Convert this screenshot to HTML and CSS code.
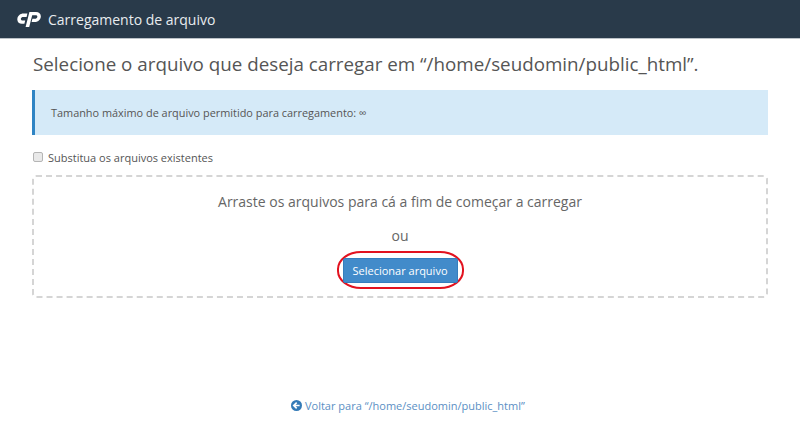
FILE: index.html
```html
<!DOCTYPE html>
<html lang="pt">
<head>
    <meta charset="UTF-8">
    <title>Carregamento de arquivo</title>
    <link rel="stylesheet" href="styles.css">
</head>
<body>
    <header class="topbar">
        <svg class="logo" width="24" height="16" viewBox="0 0 24 16">
            <path d="M10.4 2.6H6.4C3.2 2.6.9 4.8.4 7.4-.2 10.6 2 12.8 4.8 12.8H7.4L8.2 9.4H5.6C4.3 9.4 3.7 8.6 3.9 7.5 4.1 6.6 5 5.9 6.2 5.9H9.6Z" fill="#fff"/>
            <path d="M8.6 16 12.4 1H19C22.2 1 24.2 3.2 23.8 6 23.4 8.8 21 11 18 11H14.6L15.4 7.7H17.8C19.1 7.7 20.1 7 20.3 5.9 20.5 4.9 19.7 4.3 18.6 4.3H15.2L12.2 16Z" fill="#fff"/>
        </svg>
        <span class="topbar-title">Carregamento de arquivo</span>
    </header>

    <main class="content">
        <h1>Selecione o arquivo que deseja carregar em “/home/seudomin/public_html”.</h1>

        <div class="info-box">Tamanho máximo de arquivo permitido para carregamento: ∞</div>

        <label class="overwrite">
            <input type="checkbox">
            <span>Substitua os arquivos existentes</span>
        </label>

        <div class="dropzone">
            <p class="drop-text">Arraste os arquivos para cá a fim de começar a carregar</p>
            <p class="drop-or">ou</p>
            <div class="btn-ring">
                <button class="select-btn">Selecionar arquivo</button>
            </div>
        </div>

        <footer class="back">
            <a href="#">
                <svg width="11" height="11" viewBox="0 0 12 12">
                    <circle cx="6" cy="6" r="6" fill="#337ab7"/>
                    <path d="M6.2 2.8 3 6 6.2 9.2M3.4 6H9.4" fill="none" stroke="#fff" stroke-width="1.8"/>
                </svg>
                Voltar para “/home/seudomin/public_html”
            </a>
        </footer>
    </main>
</body>
</html>
```

FILE: styles.css
```css
body {
    margin: 0;
    height: 448px;
    overflow: hidden;
    background-color: #fff;
    font-family: "Open Sans", sans-serif;
    color: #555;
}
.topbar {
    display: flex;
    align-items: center;
    height: 38px;
    padding-left: 17px;
    background-color: #293a4a;
    border-bottom: 1px solid #bcc2c8;
}
.logo {
    margin-right: 7px;
}
.topbar-title {
    color: #e8ecef;
    font-size: 14px;
}
.content {
    padding: 0 32px;
}
h1 {
    margin: 12px 0 0 1px;
    height: 26px;
    font-size: 18.8px;
    font-weight: 400;
    line-height: 26px;
    white-space: nowrap;
}
.info-box {
    margin-top: 13px;
    height: 45px;
    padding-left: 16px;
    background-color: #d5eaf8;
    border-left: 3px solid #2f84c4;
    font-size: 10.9px;
    line-height: 45px;
}
.overwrite {
    display: flex;
    align-items: center;
    margin-top: 14px;
    height: 16px;
    font-size: 11px;
}
.overwrite input {
    appearance: none;
    width: 10px;
    height: 10px;
    margin: 0 5px 0 1px;
    background-color: #e9e9e9;
    border: 1px solid #b5b5b5;
    border-radius: 2px;
}
.dropzone {
    display: flex;
    flex-direction: column;
    align-items: center;
    height: 119px;
    margin-top: 10px;
    border: 2px dashed #d5d5d5;
    border-radius: 4px;
}
.drop-text {
    margin: 15px 0 0;
    font-size: 14px;
    line-height: 20px;
    color: #666;
}
.drop-or {
    margin: 14px 0 0;
    font-size: 14px;
    line-height: 20px;
    color: #666;
}
.btn-ring {
    margin-top: 5px;
    padding: 5px 4px 4px;
    border: 2px solid #e2121f;
    border-radius: 24px / 18px;
}
.select-btn {
    display: block;
    width: 115px;
    height: 25px;
    padding: 0;
    background-color: #428bca;
    border: 1px solid #357ebd;
    border-radius: 2px;
    color: #fff;
    font-family: "Open Sans", sans-serif;
    font-size: 11px;
}
.back {
    margin-top: 100px;
    padding-left: 16px;
    text-align: center;
    font-size: 11px;
}
.back a {
    color: #5b8fc4;
    text-decoration: none;
}
.back svg {
    vertical-align: -1px;
}
```
